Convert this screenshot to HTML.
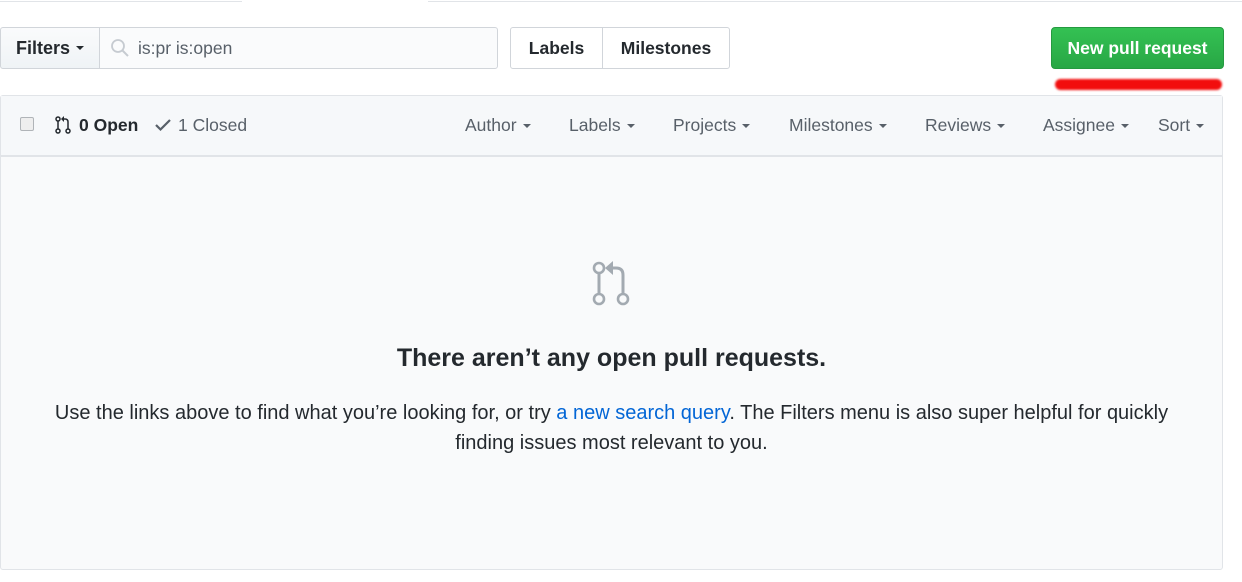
<!DOCTYPE html>
<html><head><style>
body{margin:0;width:1242px;height:582px;background:#fff;font-family:"Liberation Sans",sans-serif;position:relative;overflow:hidden;color:#24292e}
.a{position:absolute}
.caret{display:inline-block;width:0;height:0;border:4px solid transparent;border-top:4px solid currentColor;border-bottom:0;vertical-align:middle;margin-left:6px}
.btn{position:absolute;border:1px solid #d1d5da;box-sizing:border-box;font-size:17.5px;font-weight:bold;display:flex;align-items:center;justify-content:center}
.hd{font-size:17.5px;color:#586069;top:115px}
</style></head><body>
<div class="a" style="left:0;top:1px;width:242px;height:1px;background:#e1e4e8"></div>
<div class="a" style="left:428px;top:1px;width:814px;height:1px;background:#e1e4e8"></div>

<div class="btn" style="left:0;top:27px;width:100px;height:42px;background:linear-gradient(#fafbfc,#eff3f6);border-radius:3px 0 0 3px;color:#24292e;font-size:18px">Filters<span class="caret"></span></div>
<div class="btn" style="left:99px;top:27px;width:399px;height:42px;background:#fafbfc;border-radius:0 3px 3px 0;justify-content:flex-start;font-weight:normal;color:#586069;font-size:17.5px">
<svg style="margin:0 8px 0 10px" width="20" height="20" viewBox="0 0 20 20"><circle cx="8" cy="8" r="6" fill="none" stroke="#c6cbd1" stroke-width="1.8"/><path d="M12.5 12.5L18 18" stroke="#c6cbd1" stroke-width="2"/></svg>is:pr is:open</div>

<div class="btn" style="left:510px;top:27px;width:93px;height:42px;border-radius:3px 0 0 3px">Labels</div>
<div class="btn" style="left:602px;top:27px;width:128px;height:42px;border-radius:0 3px 3px 0">Milestones</div>

<div class="btn" style="left:1051px;top:27px;width:173px;height:42px;border-radius:4px;background:linear-gradient(#34c153,#28a745);border-color:#259a40;color:#fff;font-size:17.5px">New pull request</div>
<div class="a" style="left:1055px;top:79px;width:167px;height:11px;border-radius:6px;background:#f20d0d;filter:blur(1px)"></div>

<div class="a" style="left:0;top:95px;width:1223px;height:475px;border:1px solid #e1e4e8;border-radius:3px;background:#f9fafb;box-sizing:border-box"></div>
<div class="a" style="left:1px;top:96px;width:1221px;height:59px;background:#f6f8fa;border-bottom:2px solid #e1e4e8"></div>

<div class="a" style="left:20px;top:117px;width:12px;height:12px;border:1px solid #b0b4b8;border-radius:2px;background:#eee"></div>
<svg class="a" style="left:55px;top:116px" width="16" height="18" viewBox="0 0 16 18"><circle cx="3" cy="3" r="2" fill="none" stroke="#24292e" stroke-width="1.5"/><circle cx="3" cy="15" r="2" fill="none" stroke="#24292e" stroke-width="1.5"/><circle cx="13" cy="15" r="2" fill="none" stroke="#24292e" stroke-width="1.5"/><path d="M3 5V13M13 13V6Q13 3 10 3H8" fill="none" stroke="#24292e" stroke-width="1.5"/><path d="M9 0L6 3L9 6Z" fill="#24292e"/></svg>
<div class="a" style="left:79px;top:115px;font-size:17.5px;font-weight:bold">0 Open</div>
<svg class="a" style="left:155px;top:118px" width="16" height="14" viewBox="0 0 16 14"><path d="M1 7L5.5 11.5L15 2" fill="none" stroke="#586069" stroke-width="2.2"/></svg>
<div class="a" style="left:178px;top:115px;font-size:17.5px;color:#586069">1 Closed</div>

<div class="a hd" style="left:465px">Author<span class="caret"></span></div>
<div class="a hd" style="left:569px">Labels<span class="caret"></span></div>
<div class="a hd" style="left:673px">Projects<span class="caret"></span></div>
<div class="a hd" style="left:789px">Milestones<span class="caret"></span></div>
<div class="a hd" style="left:925px">Reviews<span class="caret"></span></div>
<div class="a hd" style="left:1043px">Assignee<span class="caret"></span></div>
<div class="a hd" style="left:1158px">Sort<span class="caret"></span></div>

<svg class="a" style="left:590px;top:259px" width="40" height="48" viewBox="0 0 40 48"><circle cx="9" cy="9" r="5" fill="none" stroke="#a3aab1" stroke-width="2.6"/><circle cx="9" cy="40" r="5" fill="none" stroke="#a3aab1" stroke-width="2.6"/><circle cx="33" cy="40" r="5" fill="none" stroke="#a3aab1" stroke-width="2.6"/><path d="M9 14V35M33 35V16Q33 9 26 9H21" fill="none" stroke="#a3aab1" stroke-width="3"/><path d="M23 2L15 9L23 16Z" fill="#a3aab1"/></svg>

<div class="a" style="left:0;top:344px;width:1223px;text-align:center;font-size:25px;font-weight:bold">There aren’t any open pull requests.</div>
<div class="a" style="left:41px;top:398px;width:1141px;text-align:center;font-size:20px;line-height:30px;color:#24292e">Use the links above to find what you’re looking for, or try <span style="color:#0366d6">a new search query</span>. The Filters menu is also super helpful for quickly finding issues most relevant to you.</div>
</body></html>
